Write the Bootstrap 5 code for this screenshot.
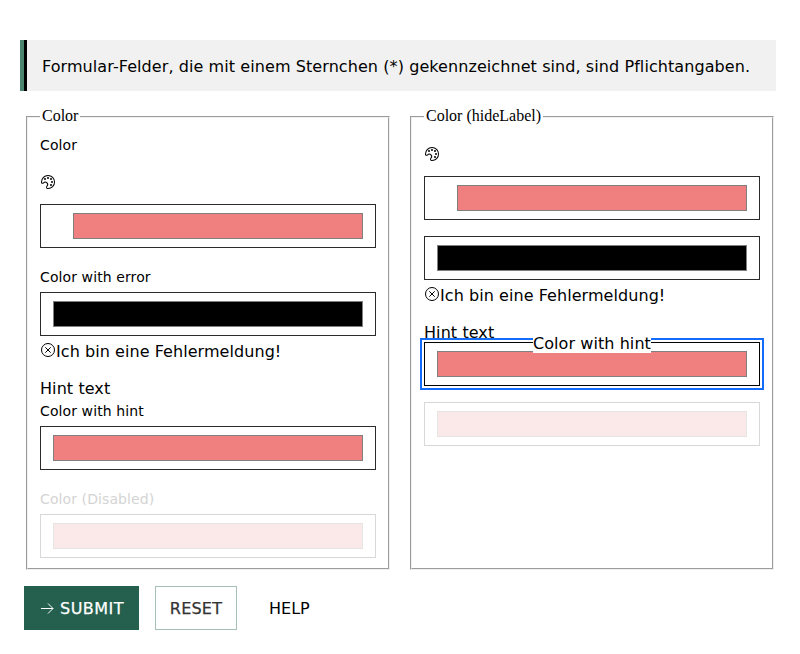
<!DOCTYPE html>
<html lang="de">
<head>
<meta charset="utf-8">
<meta name="viewport" content="width=device-width, initial-scale=1">
<title>Color</title>
<link href="https://cdn.jsdelivr.net/npm/bootstrap@5.3.0/dist/css/bootstrap.min.css" rel="stylesheet">
<style>
body{font-family:Verdana,"DejaVu Sans",sans-serif;font-size:16px;line-height:22px;color:#000;background:#fff}
.page-form{padding:40px 24px 24px}
.notice{margin-left:-4px;height:51px;border-left:4px solid #4a8570;box-shadow:inset 3px 0 #000;background:#f1f1f1;padding:2px 0 0 18px;margin-bottom:16px;white-space:nowrap}
.form-columns{display:grid;grid-template-columns:1fr 1fr;gap:16px}
.group{margin:0 2px;border:2px groove #f0f0f0;padding:0 12px 10px;height:463px}
.group legend{float:none;width:auto;margin:0;padding:0 2px 2px;font:16px/18px "Liberation Serif","Times New Roman",serif}
.field-label{display:block;font-size:14px;line-height:22px;height:22px;margin-bottom:4px;white-space:nowrap;letter-spacing:.1px}
.color-box{height:44px;border:1px solid #2b2b2b;padding:8px 12px;background:#fff}
.color-box.with-icon{padding-left:32px}
.swatch{height:26px;border:1px solid #808080;background:#f08080}
.swatch.dark{background:#000}
.is-off .color-box{border-color:#d8d8d8}
.is-off .swatch{border-color:#e5e5e5;background:#fbe8e8}
.is-off .field-label{color:#d4d4d4}
.color-box.focused{border-color:#000;outline:2px solid #136cfb;outline-offset:2px}
.color-box .tip{left:108px;top:-8px;height:18px;line-height:18px;background:#fff;white-space:nowrap;letter-spacing:.07px}
.msg{height:22px;margin-top:4px;white-space:nowrap}
.msg svg{margin-top:-2px}
.msg span{padding-top:2px;letter-spacing:.06px}
.hint{height:23px;padding-top:1px;letter-spacing:.08px}
.hint-tight{height:21px}
svg{display:block;flex:none}
.first-l{margin-top:7px}
.icon-l{margin:18px 0 14px}
.icon-r{margin:19px 0 14px}
.gap-18{margin-top:18px}.gap-15{margin-top:15px}
.act{height:44px;border-radius:0;font-size:16px;line-height:22px;padding:2px 12px 0;-webkit-text-stroke:.25px currentColor}
.act-main{width:115px;background:#24604d;color:#fff;letter-spacing:.45px;gap:5px}
.act-main svg{margin-top:-2px}
.act-reset{width:82px;border:1px solid #a5bfb6;color:#333;letter-spacing:.2px}
.act-help{color:#000;-webkit-text-stroke:0;letter-spacing:0}
.w-notice{letter-spacing:.08px}
</style>
</head>
<body>
<svg width="0" height="0" class="d-none" aria-hidden="true">
<symbol id="palette" viewBox="0 0 16 16"><path d="M8 1.003a7 7 0 0 0-7 7v.43c.09 1.51 1.91 1.79 3 .7a1.87 1.87 0 0 1 2.64 2.64c-1.1 1.16-.79 3.07.8 3.2h.6a7 7 0 1 0 0-14l-.04.03zm0 13h-.52a.58.58 0 0 1-.36-.14.56.56 0 0 1-.15-.3 1.24 1.24 0 0 1 .35-1.08 2.87 2.87 0 0 0 0-4 2.87 2.87 0 0 0-4.06 0 1 1 0 0 1-.9.34.41.41 0 0 1-.22-.12.42.42 0 0 1-.1-.29v-.37a6 6 0 1 1 6 6l-.04-.04zM9 3.997a1 1 0 1 1-2 0 1 1 0 0 1 2 0zm3 7.007a1 1 0 1 1-2 0 1 1 0 0 1 2 0zm-7-5a1 1 0 1 0 0-2 1 1 0 0 0 0 2zm7-1a1 1 0 1 1-2 0 1 1 0 0 1 2 0zM13 8a1 1 0 1 1-2 0 1 1 0 0 1 2 0z"/></symbol>
<symbol id="error" viewBox="0 0 16 16"><circle cx="8" cy="8" r="6.5" fill="none" stroke="#000"/><path d="M5.3 5.3l5.4 5.4M10.7 5.3l-5.4 5.4" stroke="#000"/></symbol>
</svg>
<main class="page-form">
<div class="notice d-flex align-items-center"><span class="w-notice">Formular-Felder, die mit einem Sternchen (*) gekennzeichnet sind, sind Pflichtangaben.</span></div>
<div class="form-columns">
<fieldset class="group">
<legend>Color</legend>
<div class="first-l"><span class="field-label mb-0">Color</span><svg class="icon-l" width="16" height="16"><use href="#palette"/></svg><div class="color-box with-icon"><div class="swatch"></div></div></div>
<div class="gap-18"><span class="field-label">Color with error</span><div class="color-box"><div class="swatch dark"></div></div>
<div class="msg d-flex align-items-center"><svg width="16" height="16"><use href="#error"/></svg><span>Ich bin eine Fehlermeldung!</span></div></div>
<div class="gap-15"><div class="hint">Hint text</div><span class="field-label">Color with hint</span><div class="color-box"><div class="swatch"></div></div></div>
<div class="gap-18 is-off"><span class="field-label">Color (Disabled)</span><div class="color-box"><div class="swatch"></div></div></div>
</fieldset>
<fieldset class="group">
<legend>Color (hideLabel)</legend>
<svg class="icon-r" width="16" height="16"><use href="#palette"/></svg>
<div class="color-box with-icon"><div class="swatch"></div></div>
<div class="color-box mt-3"><div class="swatch dark"></div></div>
<div class="msg d-flex align-items-center"><svg width="16" height="16"><use href="#error"/></svg><span>Ich bin eine Fehlermeldung!</span></div>
<div class="gap-15"><div class="hint hint-tight">Hint text</div><div class="color-box focused position-relative"><div class="swatch"></div><span class="tip position-absolute">Color with hint</span></div></div>
<div class="is-off mt-3"><div class="color-box"><div class="swatch"></div></div></div>
</fieldset>
</div>
<div class="d-flex gap-3 mt-3">
<button class="btn act act-main border-0 d-flex align-items-center justify-content-center" type="button"><svg width="16" height="16" viewBox="0 0 16 16" fill="none" stroke="#fff"><path d="M2 8.5h12M9 3.5l5 5-5 5"/></svg>SUBMIT</button>
<button class="btn act act-reset" type="button">RESET</button>
<button class="btn act act-help border-0 ps-3" type="button">HELP</button>
</div>
</main>
<script src="https://cdn.jsdelivr.net/npm/bootstrap@5.3.0/dist/js/bootstrap.bundle.min.js"></script>
</body>
</html>
